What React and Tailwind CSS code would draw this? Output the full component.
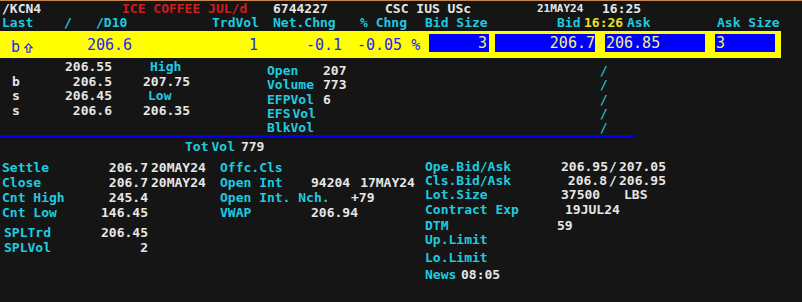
const cyan = "text-[#1ecbe0]";

const UpArrow = () => (
  <svg width="9" height="10" viewBox="0 0 9 10" className="ml-[4px] mt-[1px]">
    <path d="M4.5 0.8 L8.2 4.8 H6 V9.2 H3 V4.8 H0.8 Z" fill="none" stroke="#2424ff" strokeWidth="1.1" />
  </svg>
);

const App = () => {
  return (
    <div className="w-[802px] h-[302px] overflow-hidden bg-[#151515] border-t border-[#c8874a] font-['DejaVu_Sans_Mono',monospace] text-[13px] font-bold text-[#e6e6e6] whitespace-pre">
      {/* header */}
      <div className="pt-[1px] pl-[2px] leading-[14px]">
        <div className="flex h-[14px]">
          <span className="w-[120px] shrink-0">/KCN4</span>
          <span className="w-[151px] shrink-0 text-[#d21c1c]">ICE COFFEE JUL/d</span>
          <span className="w-[112px] shrink-0">6744227</span>
          <span className="w-[152px] shrink-0">CSC IUS USc</span>
          <span className="w-[65px] shrink-0 text-[11px]">21MAY24</span>
          <span>16:25</span>
        </div>
        <div className={`flex h-[14px] ${cyan}`}>
          <span className="w-[62px] shrink-0">Last</span>
          <span className="w-[32px] shrink-0">/</span>
          <span className="w-[116px] shrink-0">/D10</span>
          <span className="w-[61px] shrink-0">TrdVol</span>
          <span className="w-[87px] shrink-0">Net.Chng</span>
          <span className="w-[65px] shrink-0">% Chng</span>
          <span className="w-[132px] shrink-0">Bid Size</span>
          <span className="w-[27px] shrink-0">Bid</span>
          <span className="w-[43px] shrink-0 text-[#f0e020]">16:26</span>
          <span className="w-[90px] shrink-0">Ask</span>
          <span>Ask Size</span>
        </div>
      </div>

      {/* last trade band */}
      <div className="mt-[1px] flex h-[27px] w-[781px] bg-[#ffff00] pt-[3px] text-[15px] font-normal leading-[18px] text-[#2424ff]">
        <div className="flex w-[87px] shrink-0 items-center pl-[11px] pt-[2px]">
          <span>b</span>
          <UpArrow />
        </div>
        <span className="w-[110px] shrink-0 pt-[2px]">206.6</span>
        <span className="w-[61px] shrink-0 pt-[2px] text-right">1</span>
        <span className="w-[84px] shrink-0 pt-[2px] text-right">-0.1</span>
        <span className="w-[87px] shrink-0 pt-[2px] pl-[15px]">-0.05 %</span>
        <span className="h-[18px] w-[60px] shrink-0 bg-[#0000ff] pr-[2px] text-right text-[#f0f08c]">3</span>
        <span className="ml-[6px] h-[18px] w-[100px] shrink-0 bg-[#0000ff] text-right text-[#f0f08c]">206.7</span>
        <span className="w-[10px] shrink-0 text-center text-[#e8e880]">/</span>
        <span className="h-[18px] w-[100px] shrink-0 bg-[#0000ff] pl-[1px] text-[#f0f08c]">206.85</span>
        <span className="ml-[10px] h-[18px] w-[60px] shrink-0 bg-[#0000ff] pl-[1px] text-[#f0f08c]">3</span>
      </div>

      {/* depth + session */}
      <div className="flex h-[77px]">
        <div className="w-[267px] shrink-0 pt-[2px] leading-[14.5px]">
          <div className="flex h-[14.5px]">
            <span className="w-[32px] shrink-0" />
            <span className="w-[80px] shrink-0 text-right">206.55</span>
            <span className={`pl-[38px] ${cyan}`}>High</span>
          </div>
          <div className="flex h-[14.5px]">
            <span className="w-[12px] shrink-0" />
            <span className="w-[20px] shrink-0">b</span>
            <span className="w-[80px] shrink-0 text-right">206.5</span>
            <span className="pl-[31px]">207.75</span>
          </div>
          <div className="flex h-[14.5px]">
            <span className="w-[12px] shrink-0" />
            <span className="w-[20px] shrink-0">s</span>
            <span className="w-[80px] shrink-0 text-right">206.45</span>
            <span className={`pl-[36px] ${cyan}`}>Low</span>
          </div>
          <div className="flex h-[14.5px]">
            <span className="w-[12px] shrink-0" />
            <span className="w-[20px] shrink-0">s</span>
            <span className="w-[80px] shrink-0 text-right">206.6</span>
            <span className="pl-[31px]">206.35</span>
          </div>
        </div>
        <div className="pt-[6px] leading-[14.3px]">
          {[
            ["Open", "207"],
            ["Volume", "773"],
            ["EFPVol", "6"],
            ["EFS", ""],
            ["BlkVol", ""],
          ].map(([label, val]) => (
            <div key={label} className="flex h-[14.3px]">
              <span className={`w-[56px] shrink-0 ${cyan}`}>
                {label === "EFS" ? (
                  <>
                    EFS<span className="ml-[2px]">Vol</span>
                  </>
                ) : (
                  label
                )}
              </span>
              <span className="w-[277px] shrink-0">{val}</span>
              <span className={`font-normal ${cyan}`}>/</span>
            </div>
          ))}
        </div>
      </div>

      <div className="h-[2px] w-[635px] bg-[#0000ff]" />

      <div className="mt-[2px] flex h-[15px] pl-[185px] leading-[15px]">
        <span className={cyan}>Tot</span>
        <span className={`ml-[3px] ${cyan}`}>Vol</span>
        <span className="ml-[6px]">779</span>
      </div>

      {/* contract details */}
      <div className="flex leading-[15px]">
        <div className="w-[220px] shrink-0 pl-[2px] pt-[6px]">
          {[
            ["Settle", "206.7", "20MAY24"],
            ["Close", "206.7", "20MAY24"],
            ["Cnt High", "245.4", ""],
            ["Cnt Low", "146.45", ""],
          ].map(([label, val, date]) => (
            <div key={label} className="flex h-[15px]">
              <span className={`w-[80px] shrink-0 ${cyan}`}>{label}</span>
              <span className="w-[66px] shrink-0 text-right">{val}</span>
              <span className="ml-[3px]">{date}</span>
            </div>
          ))}
          <div className="mt-[5px] flex h-[15px]">
            <span className={`w-[80px] shrink-0 pl-[2px] ${cyan}`}>SPLTrd</span>
            <span className="w-[66px] shrink-0 text-right">206.45</span>
          </div>
          <div className="flex h-[15px]">
            <span className={`w-[80px] shrink-0 pl-[2px] ${cyan}`}>SPLVol</span>
            <span className="w-[66px] shrink-0 text-right">2</span>
          </div>
        </div>

        <div className="w-[205px] shrink-0 pt-[6px]">
          <div className="flex h-[15px]">
            <span className={cyan}>Offc.Cls</span>
          </div>
          <div className="flex h-[15px]">
            <span className={`w-[91px] shrink-0 ${cyan}`}>Open Int</span>
            <span>94204</span>
            <span className="ml-[10px]">17MAY24</span>
          </div>
          <div className="flex h-[15px]">
            <span className={`w-[131px] shrink-0 ${cyan}`}>Open Int. Nch.</span>
            <span>+79</span>
          </div>
          <div className="flex h-[15px]">
            <span className={`w-[91px] shrink-0 ${cyan}`}>VWAP</span>
            <span>206.94</span>
          </div>
        </div>

        <div className="pt-[5px]">
          <div className="flex h-[14px]">
            <span className={`w-[136px] shrink-0 ${cyan}`}>Ope.Bid/Ask</span>
            <span className="w-[46px] shrink-0 text-right">206.95</span>
            <span className="w-[12px] shrink-0 text-center">/</span>
            <span>207.05</span>
          </div>
          <div className="flex h-[14px]">
            <span className={`w-[136px] shrink-0 ${cyan}`}>Cls.Bid/Ask</span>
            <span className="w-[46px] shrink-0 text-right">206.8</span>
            <span className="w-[12px] shrink-0 text-center">/</span>
            <span>206.95</span>
          </div>
          <div className="flex h-[15px]">
            <span className={`w-[136px] shrink-0 ${cyan}`}>Lot.Size</span>
            <span className="w-[63px] shrink-0">37500</span>
            <span>LBS</span>
          </div>
          <div className="flex h-[16px]">
            <span className={`w-[140px] shrink-0 ${cyan}`}>Contract Exp</span>
            <span>19JUL24</span>
          </div>
          <div className="flex h-[14px]">
            <span className={`w-[132px] shrink-0 ${cyan}`}>DTM</span>
            <span>59</span>
          </div>
          <div className="flex h-[18px]">
            <span className={cyan}>Up.Limit</span>
          </div>
          <div className="flex h-[17px]">
            <span className={cyan}>Lo.Limit</span>
          </div>
          <div className="flex h-[15px]">
            <span className={`w-[36px] shrink-0 ${cyan}`}>News</span>
            <span>08:05</span>
          </div>
        </div>
      </div>
    </div>
  );
};

export default App;
